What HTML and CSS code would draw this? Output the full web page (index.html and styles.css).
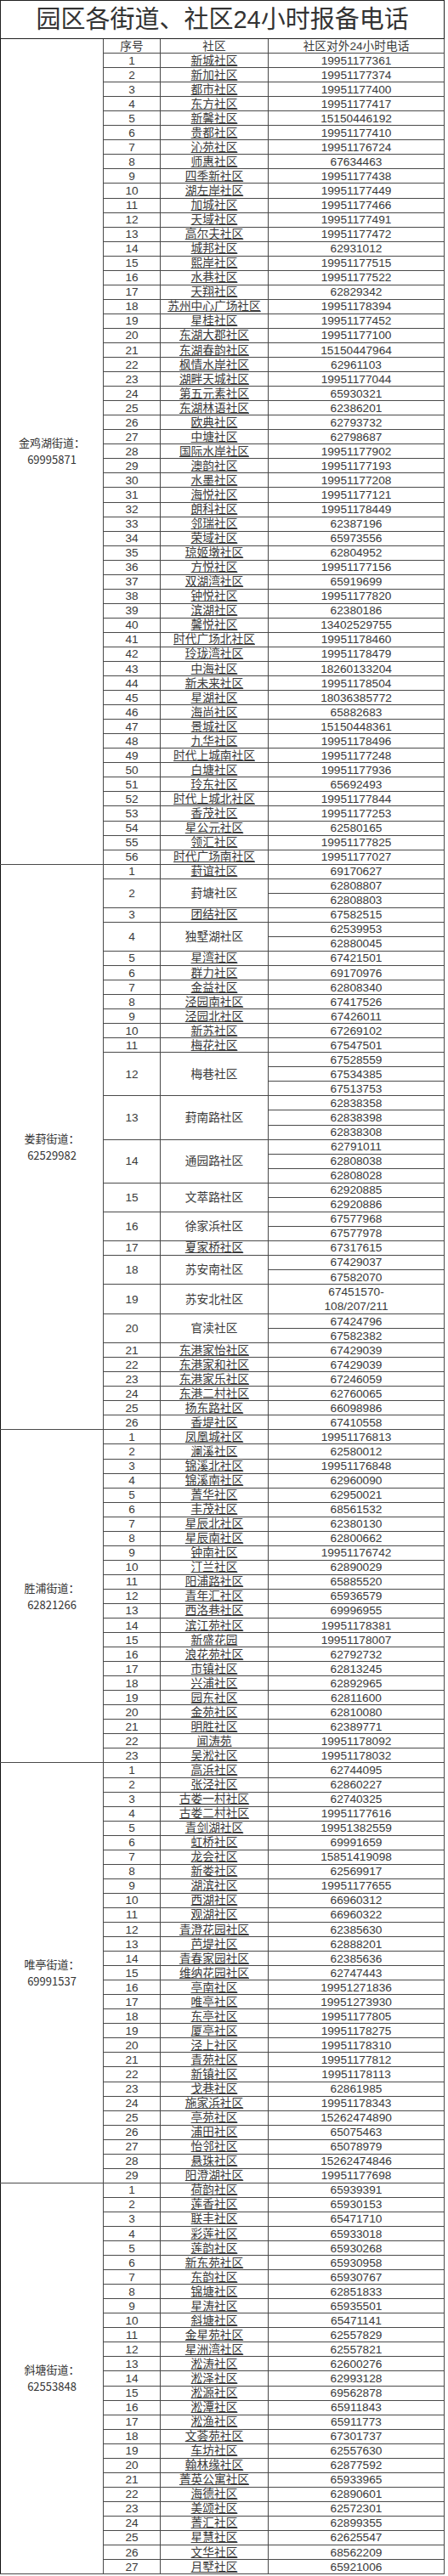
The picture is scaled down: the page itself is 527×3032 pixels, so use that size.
FILE: index.html
```html
<!DOCTYPE html>
<html lang="zh-CN">
<head>
<meta charset="utf-8">
<title>园区各街道、社区24小时报备电话</title>
<link rel="stylesheet" href="styles.css">
</head>
<body>
<table class="sheet">
<colgroup><col class="c1"><col class="c2"><col class="c3"><col class="c4"></colgroup>
<tr class="title-row"><td colspan="4" class="title">园区各街道、社区24小时报备电话</td></tr>
<tr><td rowspan="57" class="street">金鸡湖街道：<br>69995871</td><td>序号</td><td>社区</td><td>社区对外24小时电话</td></tr>
<tr><td>1</td><td class="n">新城社区</td><td>19951177361</td></tr>
<tr><td>2</td><td class="n">新加社区</td><td>19951177374</td></tr>
<tr><td>3</td><td class="n">都市社区</td><td>19951177400</td></tr>
<tr><td>4</td><td class="n">东方社区</td><td>19951177417</td></tr>
<tr><td>5</td><td class="n">新馨社区</td><td>15150446192</td></tr>
<tr><td>6</td><td class="n">贵都社区</td><td>19951177410</td></tr>
<tr><td>7</td><td class="n">沁苑社区</td><td>19951176724</td></tr>
<tr><td>8</td><td class="n">师惠社区</td><td>67634463</td></tr>
<tr><td>9</td><td class="n">四季新社区</td><td>19951177438</td></tr>
<tr><td>10</td><td class="n">湖左岸社区</td><td>19951177449</td></tr>
<tr><td>11</td><td class="n">加城社区</td><td>19951177466</td></tr>
<tr><td>12</td><td class="n">天域社区</td><td>19951177491</td></tr>
<tr><td>13</td><td class="n">高尔夫社区</td><td>19951177472</td></tr>
<tr><td>14</td><td class="n">城邦社区</td><td>62931012</td></tr>
<tr><td>15</td><td class="n">熙岸社区</td><td>19951177515</td></tr>
<tr><td>16</td><td class="n">水巷社区</td><td>19951177522</td></tr>
<tr><td>17</td><td class="n">天翔社区</td><td>62829342</td></tr>
<tr><td>18</td><td class="n">苏州中心广场社区</td><td>19951178394</td></tr>
<tr><td>19</td><td class="n">星桂社区</td><td>19951177452</td></tr>
<tr><td>20</td><td class="n">东湖大郡社区</td><td>19951177100</td></tr>
<tr><td>21</td><td class="n">东湖春韵社区</td><td>15150447964</td></tr>
<tr><td>22</td><td class="n">枫情水岸社区</td><td>62961103</td></tr>
<tr><td>23</td><td class="n">湖畔天城社区</td><td>19951177044</td></tr>
<tr><td>24</td><td class="n">第五元素社区</td><td>65930321</td></tr>
<tr><td>25</td><td class="n">东湖林语社区</td><td>62386201</td></tr>
<tr><td>26</td><td class="n">欧典社区</td><td>62793732</td></tr>
<tr><td>27</td><td class="n">中塘社区</td><td>62798687</td></tr>
<tr><td>28</td><td class="n">国际水岸社区</td><td>19951177902</td></tr>
<tr><td>29</td><td class="n">澳韵社区</td><td>19951177193</td></tr>
<tr><td>30</td><td class="n">水墨社区</td><td>19951177208</td></tr>
<tr><td>31</td><td class="n">海悦社区</td><td>19951177121</td></tr>
<tr><td>32</td><td class="n">朗科社区</td><td>19951178449</td></tr>
<tr><td>33</td><td class="n">邻瑞社区</td><td>62387196</td></tr>
<tr><td>34</td><td class="n">荣域社区</td><td>65973556</td></tr>
<tr><td>35</td><td class="n">琼姬墩社区</td><td>62804952</td></tr>
<tr><td>36</td><td class="n">方悦社区</td><td>19951177156</td></tr>
<tr><td>37</td><td class="n">双湖湾社区</td><td>65919699</td></tr>
<tr><td>38</td><td class="n">钟悦社区</td><td>19951177820</td></tr>
<tr><td>39</td><td class="n">滨湖社区</td><td>62380186</td></tr>
<tr><td>40</td><td class="n">馨悦社区</td><td>13402529755</td></tr>
<tr><td>41</td><td class="n">时代广场北社区</td><td>19951178460</td></tr>
<tr><td>42</td><td class="n">玲珑湾社区</td><td>19951178479</td></tr>
<tr><td>43</td><td class="n">中海社区</td><td>18260133204</td></tr>
<tr><td>44</td><td class="n">新未来社区</td><td>19951178504</td></tr>
<tr><td>45</td><td class="n">星湖社区</td><td>18036385772</td></tr>
<tr><td>46</td><td class="n">海尚社区</td><td>65882683</td></tr>
<tr><td>47</td><td class="n">景城社区</td><td>15150448361</td></tr>
<tr><td>48</td><td class="n">九华社区</td><td>19951178496</td></tr>
<tr><td>49</td><td class="n">时代上城南社区</td><td>19951177248</td></tr>
<tr><td>50</td><td class="n">白塘社区</td><td>19951177936</td></tr>
<tr><td>51</td><td class="n">玲东社区</td><td>65692493</td></tr>
<tr><td>52</td><td class="n">时代上城北社区</td><td>19951177844</td></tr>
<tr><td>53</td><td class="n">香茂社区</td><td>19951177253</td></tr>
<tr><td>54</td><td class="n">星公元社区</td><td>62580165</td></tr>
<tr><td>55</td><td class="n">领汇社区</td><td>19951177825</td></tr>
<tr><td>56</td><td class="n">时代广场南社区</td><td>19951177027</td></tr>

<tr><td rowspan="39" class="street">娄葑街道：<br>62529982</td><td>1</td><td class="n">葑谊社区</td><td>69170627</td></tr>
<tr><td rowspan="2">2</td><td rowspan="2">葑塘社区</td><td>62808807</td></tr>
<tr><td>62808803</td></tr>
<tr><td>3</td><td class="n">团结社区</td><td>67582515</td></tr>
<tr><td rowspan="2">4</td><td rowspan="2">独墅湖社区</td><td>62539953</td></tr>
<tr><td>62880045</td></tr>
<tr><td>5</td><td class="n">星湾社区</td><td>67421501</td></tr>
<tr><td>6</td><td class="n">群力社区</td><td>69170976</td></tr>
<tr><td>7</td><td class="n">金益社区</td><td>62808340</td></tr>
<tr><td>8</td><td class="n">泾园南社区</td><td>67417526</td></tr>
<tr><td>9</td><td class="n">泾园北社区</td><td>67426011</td></tr>
<tr><td>10</td><td class="n">新苏社区</td><td>67269102</td></tr>
<tr><td>11</td><td class="n">梅花社区</td><td>67547501</td></tr>
<tr><td rowspan="3">12</td><td rowspan="3">梅巷社区</td><td>67528559</td></tr>
<tr><td>67534385</td></tr>
<tr><td>67513753</td></tr>
<tr><td rowspan="3">13</td><td rowspan="3">葑南路社区</td><td>62838358</td></tr>
<tr><td>62838398</td></tr>
<tr><td>62838308</td></tr>
<tr><td rowspan="3">14</td><td rowspan="3">通园路社区</td><td>62791011</td></tr>
<tr><td>62808038</td></tr>
<tr><td>62808028</td></tr>
<tr><td rowspan="2">15</td><td rowspan="2">文萃路社区</td><td>62920885</td></tr>
<tr><td>62920886</td></tr>
<tr><td rowspan="2">16</td><td rowspan="2">徐家浜社区</td><td>67577968</td></tr>
<tr><td>67577978</td></tr>
<tr><td>17</td><td class="n">夏家桥社区</td><td>67317615</td></tr>
<tr><td rowspan="2">18</td><td rowspan="2">苏安南社区</td><td>67429037</td></tr>
<tr><td>67582070</td></tr>
<tr><td rowspan="2">19</td><td rowspan="2">苏安北社区</td><td rowspan="2" class="two">67451570-<br>108/207/211</td></tr>
<tr></tr>
<tr><td rowspan="2">20</td><td rowspan="2">官渎社区</td><td>67424796</td></tr>
<tr><td>67582382</td></tr>
<tr><td>21</td><td class="n">东港家怡社区</td><td>67429039</td></tr>
<tr><td>22</td><td class="n">东港家和社区</td><td>67429039</td></tr>
<tr><td>23</td><td class="n">东港家乐社区</td><td>67246059</td></tr>
<tr><td>24</td><td class="n">东港二村社区</td><td>62760065</td></tr>
<tr><td>25</td><td class="n">扬东路社区</td><td>66098986</td></tr>
<tr><td>26</td><td class="n">香堤社区</td><td>67410558</td></tr>

<tr><td rowspan="23" class="street">胜浦街道：<br>62821266</td><td>1</td><td class="n">凤凰城社区</td><td>19951176813</td></tr>
<tr><td>2</td><td class="n">澜溪社区</td><td>62580012</td></tr>
<tr><td>3</td><td class="n">锦溪北社区</td><td>19951176848</td></tr>
<tr><td>4</td><td class="n">锦溪南社区</td><td>62960090</td></tr>
<tr><td>5</td><td class="n">菁华社区</td><td>62950021</td></tr>
<tr><td>6</td><td class="n">丰茂社区</td><td>68561532</td></tr>
<tr><td>7</td><td class="n">星辰北社区</td><td>62380130</td></tr>
<tr><td>8</td><td class="n">星辰南社区</td><td>62800662</td></tr>
<tr><td>9</td><td class="n">钟南社区</td><td>19951176742</td></tr>
<tr><td>10</td><td class="n">汀兰社区</td><td>62890029</td></tr>
<tr><td>11</td><td class="n">阳浦路社区</td><td>65885520</td></tr>
<tr><td>12</td><td class="n">青年汇社区</td><td>65936579</td></tr>
<tr><td>13</td><td class="n">西洛巷社区</td><td>69996955</td></tr>
<tr><td>14</td><td class="n">滨江苑社区</td><td>19951178381</td></tr>
<tr><td>15</td><td class="n">新盛花园</td><td>19951178007</td></tr>
<tr><td>16</td><td class="n">浪花苑社区</td><td>62792732</td></tr>
<tr><td>17</td><td class="n">市镇社区</td><td>62813245</td></tr>
<tr><td>18</td><td class="n">兴浦社区</td><td>62892965</td></tr>
<tr><td>19</td><td class="n">园东社区</td><td>62811600</td></tr>
<tr><td>20</td><td class="n">金苑社区</td><td>62810080</td></tr>
<tr><td>21</td><td class="n">明胜社区</td><td>62389771</td></tr>
<tr><td>22</td><td class="n">闻涛苑</td><td>19951178092</td></tr>
<tr><td>23</td><td class="n">吴淞社区</td><td>19951178032</td></tr>

<tr><td rowspan="29" class="street">唯亭街道：<br>69991537</td><td>1</td><td class="n">高浜社区</td><td>62744095</td></tr>
<tr><td>2</td><td class="n">张泾社区</td><td>62860227</td></tr>
<tr><td>3</td><td class="n">古娄一村社区</td><td>62740325</td></tr>
<tr><td>4</td><td class="n">古娄二村社区</td><td>19951177616</td></tr>
<tr><td>5</td><td class="n">青剑湖社区</td><td>19951382559</td></tr>
<tr><td>6</td><td class="n">虹桥社区</td><td>69991659</td></tr>
<tr><td>7</td><td class="n">龙会社区</td><td>15851419098</td></tr>
<tr><td>8</td><td class="n">新娄社区</td><td>62569917</td></tr>
<tr><td>9</td><td class="n">湖滨社区</td><td>19951177655</td></tr>
<tr><td>10</td><td class="n">西湖社区</td><td>66960312</td></tr>
<tr><td>11</td><td class="n">观湖社区</td><td>66960322</td></tr>
<tr><td>12</td><td class="n">青澄花园社区</td><td>62385630</td></tr>
<tr><td>13</td><td class="n">芭堤社区</td><td>62888201</td></tr>
<tr><td>14</td><td class="n">青春家园社区</td><td>62385636</td></tr>
<tr><td>15</td><td class="n">维纳花园社区</td><td>62747443</td></tr>
<tr><td>16</td><td class="n">亭南社区</td><td>19951271836</td></tr>
<tr><td>17</td><td class="n">唯亭社区</td><td>19951273930</td></tr>
<tr><td>18</td><td class="n">东亭社区</td><td>19951177805</td></tr>
<tr><td>19</td><td class="n">厦亭社区</td><td>19951178275</td></tr>
<tr><td>20</td><td class="n">泾上社区</td><td>19951178310</td></tr>
<tr><td>21</td><td class="n">青苑社区</td><td>19951177812</td></tr>
<tr><td>22</td><td class="n">新镇社区</td><td>19951178113</td></tr>
<tr><td>23</td><td class="n">戈巷社区</td><td>62861985</td></tr>
<tr><td>24</td><td class="n">施家浜社区</td><td>19951178343</td></tr>
<tr><td>25</td><td class="n">亭苑社区</td><td>15262474890</td></tr>
<tr><td>26</td><td class="n">浦田社区</td><td>65075463</td></tr>
<tr><td>27</td><td class="n">怡邻社区</td><td>65078979</td></tr>
<tr><td>28</td><td class="n">悬珠社区</td><td>15262474846</td></tr>
<tr><td>29</td><td class="n">阳澄湖社区</td><td>19951177698</td></tr>

<tr><td rowspan="27" class="street">斜塘街道：<br>62553848</td><td>1</td><td class="n">荷韵社区</td><td>65939391</td></tr>
<tr><td>2</td><td class="n">莲香社区</td><td>65930153</td></tr>
<tr><td>3</td><td class="n">联丰社区</td><td>65471710</td></tr>
<tr><td>4</td><td class="n">彩莲社区</td><td>65933018</td></tr>
<tr><td>5</td><td class="n">莲韵社区</td><td>65930268</td></tr>
<tr><td>6</td><td class="n">新东苑社区</td><td>65930958</td></tr>
<tr><td>7</td><td class="n">东韵社区</td><td>65930767</td></tr>
<tr><td>8</td><td class="n">锦塘社区</td><td>62851833</td></tr>
<tr><td>9</td><td class="n">星涛社区</td><td>65935501</td></tr>
<tr><td>10</td><td class="n">斜塘社区</td><td>65471141</td></tr>
<tr><td>11</td><td class="n">金星苑社区</td><td>62557829</td></tr>
<tr><td>12</td><td class="n">星洲湾社区</td><td>62557821</td></tr>
<tr><td>13</td><td class="n">淞涛社区</td><td>62600276</td></tr>
<tr><td>14</td><td class="n">淞泽社区</td><td>62993128</td></tr>
<tr><td>15</td><td class="n">淞源社区</td><td>69562878</td></tr>
<tr><td>16</td><td class="n">淞潭社区</td><td>65911843</td></tr>
<tr><td>17</td><td class="n">淞渔社区</td><td>65911773</td></tr>
<tr><td>18</td><td class="n">文荟苑社区</td><td>67301737</td></tr>
<tr><td>19</td><td class="n">车坊社区</td><td>62557630</td></tr>
<tr><td>20</td><td class="n">翰林缘社区</td><td>62877592</td></tr>
<tr><td>21</td><td class="n">菁英公寓社区</td><td>65933965</td></tr>
<tr><td>22</td><td class="n">海德社区</td><td>62890601</td></tr>
<tr><td>23</td><td class="n">美颂社区</td><td>62572301</td></tr>
<tr><td>24</td><td class="n">菁汇社区</td><td>62899355</td></tr>
<tr><td>25</td><td class="n">星慧社区</td><td>62625547</td></tr>
<tr><td>26</td><td class="n">文华社区</td><td>68562209</td></tr>
<tr><td>27</td><td class="n">月墅社区</td><td>65921006</td></tr>
</table>
</body>
</html>
```

FILE: styles.css
```css
html, body {
  margin: 0;
  padding: 0;
  background: #ffffff;
}

.sheet {
  border-collapse: collapse;
  table-layout: fixed;
  width: 522px;
  font-family: "Liberation Sans", "Noto Sans CJK SC", sans-serif;
  font-size: 13.7px;
  color: #3a3a3a;
}

.c1 { width: 121px; }
.c2 { width: 67px; }
.c3 { width: 127px; }
.c4 { width: 207px; }

.sheet tr {
  height: 17.06px;
}

.sheet td {
  border: 1px solid #4a4a4a;
  padding: 0;
  text-align: center;
  vertical-align: middle;
  line-height: 15px;
  white-space: nowrap;
  overflow: hidden;
}

.sheet .title-row {
  height: 45px;
}

.sheet .title {
  font-size: 29px;
  line-height: 43px;
  color: #333333;
  border-color: #222222;
}

.sheet .street {
  font-family: "Noto Sans CJK SC", "Liberation Sans", sans-serif;
  font-size: 13px;
  line-height: 20px;
  color: #333333;
  border-left-color: #111111;
}

.sheet .n {
  text-decoration: underline;
  text-decoration-thickness: 1px;
  text-underline-offset: 1px;
}

.sheet .two {
  line-height: 17px;
}
```
